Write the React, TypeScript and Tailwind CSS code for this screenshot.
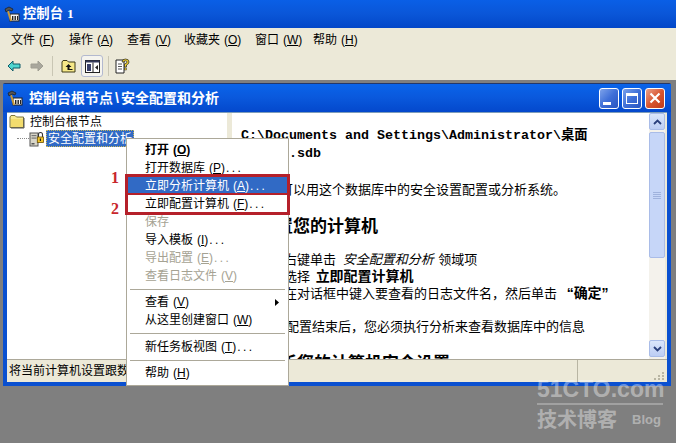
import React from "react";

const U = ({ k }: { k: string }) => (
  <span className="ml-[4px]">(<u>{k}</u>)</span>
);
const Dots = () => <span className="tracking-[2.4px] ml-[1px]">...</span>;

function MmcIcon({ className }: { className: string }) {
  return (
    <svg viewBox="0 0 16 16" className={className}>
      <rect x="6" y="8" width="9" height="7" fill="#f4f4f4" stroke="#222" />
      <rect x="8" y="10" width="1.4" height="4" fill="#222" />
      <rect x="10.5" y="10" width="1.4" height="4" fill="#222" />
      <rect x="13" y="10" width="1" height="4" fill="#222" />
      <path d="M4 5 L7 15" stroke="#c89a3a" strokeWidth="2" />
      <path d="M1 3 L5 1 L9 3 L8 5 L5 4 L2 6 Z" fill="#555" stroke="#111" strokeWidth="0.6" />
    </svg>
  );
}

function FolderIcon() {
  return (
    <svg viewBox="0 0 16 15" className="w-[16px] h-[15px] shrink-0">
      <path d="M1 3 L2 1.5 H6 L7.5 3 H14.5 V13.5 H1 Z" fill="#f7e98f" stroke="#7a7440" />
      <rect x="2" y="5" width="12" height="8" fill="#f2dc6e" />
      <path d="M15 4 V14 H2" stroke="#555" fill="none" />
    </svg>
  );
}

function SecIcon() {
  return (
    <svg viewBox="0 0 15 16" className="w-[15px] h-[16px] shrink-0">
      <rect x="1" y="2" width="8" height="13" fill="#d9d6c8" stroke="#555" />
      <rect x="2.5" y="4" width="5" height="1.2" fill="#777" />
      <rect x="2.5" y="6.5" width="5" height="1.2" fill="#777" />
      <rect x="2.5" y="12" width="3" height="1.5" fill="#555" />
      <path d="M9.5 6 V3.5 A2 2 0 0 1 13.5 3.5 V6" fill="none" stroke="#333" strokeWidth="1.1" />
      <rect x="8.3" y="6" width="6.2" height="5.5" fill="#f0c428" stroke="#6b5208" strokeWidth="0.8" />
      <rect x="10.8" y="7.5" width="1.2" height="2.5" fill="#222" />
    </svg>
  );
}

function ToolBar() {
  return (
    <div className="h-[28px] flex items-center bg-[#ece9d8] pl-[7px]">
      <svg viewBox="0 0 14 12" className="w-[14px] h-[12px]">
        <path d="M1 6 L6 1 V4 H13 V8 H6 V11 Z" fill="#4fd6d0" stroke="#0f5b68" />
      </svg>
      <svg viewBox="0 0 14 12" className="w-[14px] h-[12px] ml-[9px]">
        <path d="M13 6 L8 1 V4 H1 V8 H8 V11 Z" fill="#a9a79c" stroke="#a09e92" />
      </svg>
      <div className="w-px h-[20px] bg-[#c9c6b4] ml-[8px]" />
      <svg viewBox="0 0 15 14" className="w-[15px] h-[14px] ml-[8px]">
        <path d="M1 3 L2 1.5 H6 L7.5 3 H14 V13 H1 Z" fill="#f6e888" stroke="#3d3a18" />
        <path d="M7.5 5 L4.5 8 H6.5 V11 H11.5 V10 H8.5 V8 H10.5 Z" fill="#111" />
      </svg>
      <div className="ml-[5px] w-[22px] h-[22px] border border-[#b3b9cf] rounded-[3px] bg-[#f5f4ee] flex items-center justify-center">
        <svg viewBox="0 0 15 13" className="w-[15px] h-[13px]">
          <rect x="0.5" y="0.5" width="14" height="12" fill="#fff" stroke="#222" />
          <rect x="0.5" y="0.5" width="14" height="2" fill="#33395a" />
          <rect x="2" y="4" width="4" height="7" fill="#39406a" />
          <rect x="7.5" y="2.5" width="1" height="10" fill="#222" />
          <path d="M13 5 L10 7.5 L13 10 Z" fill="#222" />
        </svg>
      </div>
      <div className="w-px h-[20px] bg-[#c9c6b4] ml-[5px]" />
      <svg viewBox="0 0 15 16" className="w-[15px] h-[16px] ml-[6px]">
        <path d="M1 2 H9 V15 H1 Z" fill="#fff" stroke="#222" />
        <path d="M3 6 H7 M3 8.5 H7 M3 11 H7" stroke="#555" />
        <path d="M7 4 Q7 1 10.5 1 Q14 1 14 4 Q14 6 11.5 7 V9 H9.5 V6 Q12 5.5 12 4 Q12 2.8 10.5 2.8 Q9 2.8 9 4 Z" fill="#f6d52b" stroke="#222" strokeWidth="0.7" />
        <rect x="9.5" y="10" width="2" height="2" fill="#f6d52b" stroke="#222" strokeWidth="0.5" />
      </svg>
    </div>
  );
}

function WinButton({ kind }: { kind: "min" | "max" | "close" }) {
  const bg =
    kind === "close"
      ? "bg-gradient-to-br from-[#e8a08a] via-[#d9562f] to-[#c03a1a]"
      : "bg-gradient-to-br from-[#7ea2ea] via-[#3f6fd8] to-[#2a55c0]";
  return (
    <div className={`w-[20px] h-[21px] rounded-[3px] border border-white ${bg} flex items-center justify-center`}>
      {kind === "min" && <div className="w-[8px] h-[3px] bg-white self-end mb-[3px] mr-[4px]" />}
      {kind === "max" && <div className="w-[12px] h-[11px] border border-white border-t-[3px]" />}
      {kind === "close" && (
        <svg viewBox="0 0 12 12" className="w-[12px] h-[12px]">
          <path d="M1.5 1.5 L10.5 10.5 M10.5 1.5 L1.5 10.5" stroke="#fff" strokeWidth="2.2" />
        </svg>
      )}
    </div>
  );
}

function ScrollBar() {
  const btn = "w-[16px] h-[17px] rounded-[2px] border border-[#a9bce8] bg-gradient-to-b from-[#dbe6fb] to-[#bccdf4] flex items-center justify-center shrink-0";
  return (
    <div className="w-[16px] h-full bg-[#f4f2ec] flex flex-col mr-[2px]">
      <div className={btn}>
        <svg viewBox="0 0 9 6" className="w-[9px] h-[6px]"><path d="M1 5 L4.5 1.5 L8 5" fill="none" stroke="#2a3f7c" strokeWidth="1.8" /></svg>
      </div>
      <div className="h-[126px] mt-[2px] rounded-[2px] border border-[#a9bce8] bg-[#c6d6f8] flex flex-col items-center justify-center gap-[1px] shrink-0">
        <div className="w-[8px] h-px bg-[#9fb2dd]" />
        <div className="w-[8px] h-px bg-[#9fb2dd]" />
        <div className="w-[8px] h-px bg-[#9fb2dd]" />
        <div className="w-[8px] h-px bg-[#9fb2dd]" />
      </div>
      <div className="flex-1" />
      <div className={`${btn} mb-[2px]`}>
        <svg viewBox="0 0 9 6" className="w-[9px] h-[6px]"><path d="M1 1 L4.5 4.5 L8 1" fill="none" stroke="#2a3f7c" strokeWidth="1.8" /></svg>
      </div>
    </div>
  );
}

function Content() {
  const mono = "font-[family-name:'Liberation_Mono','Noto_Sans_CJK_SC',monospace] font-bold text-[13.33px] leading-[18px] text-black whitespace-nowrap";
  const body = "text-[13px] leading-[16px] whitespace-nowrap text-black";
  const head = "text-[17px] font-bold leading-[22px] whitespace-nowrap text-black";
  return (
    <div className="flex-1 min-w-0 bg-white overflow-hidden pl-[9px] pt-[14px]">
      <div className={mono}>C:\Documents and Settings\Administrator\桌面</div>
      <div className={mono}>\12345.sdb</div>
      <div className={`${body} mt-[19px]`}>您现在可以用这个数据库中的安全设置配置或分析系统。</div>
      <div className={`${head} mt-[18px] ml-[1px]`}>要配置您的计算机</div>
      <div className={`${body} mt-[14px] ml-[43px]`}>
        右键单击 <i className="ml-[3px] mr-[1px]">安全配置和分析</i> 领域项
      </div>
      <div className={`${body} ml-[43px]`}>
        选择 <b className="ml-[2px] text-[14px]">立即配置计算机</b>
      </div>
      <div className={`${body} ml-[43px]`}>
        在对话框中键入要查看的日志文件名，然后单击 <b className="ml-[6px] text-[14px]">“确定”</b>
      </div>
      <div className={`${body} mt-[17px] ml-[45px]`}>配置结束后，您必须执行分析来查看数据库中的信息</div>
      <div className={`${head} mt-[18px] ml-[5px]`}>要分析您的计算机安全设置</div>
    </div>
  );
}

function MenuItem({
  children,
  disabled,
  active,
  bold,
  arrow,
}: {
  children: React.ReactNode;
  disabled?: boolean;
  active?: boolean;
  bold?: boolean;
  arrow?: boolean;
}) {
  const color = active ? "bg-[#316ac5] text-white" : disabled ? "text-[#a5a292]" : "text-black";
  return (
    <div className={`h-[18px] pl-[18px] pr-[9px] flex items-center justify-between text-[12px] whitespace-nowrap ${color} ${bold ? "font-bold" : ""}`}>
      <span>{children}</span>
      {arrow && (
        <svg viewBox="0 0 4 7" className="w-[4px] h-[7px]"><path d="M0 0 L4 3.5 L0 7 Z" fill="#000" /></svg>
      )}
    </div>
  );
}

const Sep = ({ h }: { h: string }) => (
  <div className={`${h} flex items-center px-[3px]`}>
    <div className="h-px w-full bg-[#aca899]" />
  </div>
);

export default function App() {
  return (
    <div className="relative w-[676px] h-[443px] overflow-hidden bg-[#7f7f7f] font-[family-name:'Liberation_Sans','Noto_Sans_CJK_SC',sans-serif] select-none">
      {/* main title */}
      <div className="h-[28px] bg-gradient-to-b from-[#0a5fe6] via-[#0a56d8] to-[#0347c8] flex items-center pl-[4px] gap-[3px]">
        <MmcIcon className="w-[16px] h-[16px]" />
        <span className="text-white font-bold text-[13.33px] whitespace-nowrap">控制台<span className="ml-[4px] font-[family-name:'Liberation_Serif',serif]">1</span></span>
      </div>
      {/* menu */}
      <div className="h-[24px] bg-[#ece9d8] flex items-center pl-[11px] text-[12px] text-black whitespace-nowrap">
        <span className="w-[58px]">文件<U k="F" /></span>
        <span className="w-[58px]">操作<U k="A" /></span>
        <span className="w-[57px]">查看<U k="V" /></span>
        <span className="w-[71px]">收藏夹<U k="O" /></span>
        <span className="w-[58px]">窗口<U k="W" /></span>
        <span>帮助<U k="H" /></span>
      </div>
      <ToolBar />
      {/* child window */}
      <div className="mt-[3px] ml-[3px] w-[668px] h-[303px] flex flex-col bg-[#0a50d0] border-t border-[#24386a] rounded-t-[2px]">
        <div className="h-[28px] shrink-0 bg-gradient-to-b from-[#0a64ea] via-[#0a58dc] to-[#0448cc] flex items-center pl-[4px] pr-[4px]">
          <MmcIcon className="w-[16px] h-[16px] mr-[6px]" />
          <span className="text-white font-bold text-[14px] whitespace-nowrap">控制台根节点<span className="mx-[2px]">\</span>安全配置和分析</span>
          <div className="ml-auto flex gap-[3px] mr-[2px]">
            <WinButton kind="min" />
            <WinButton kind="max" />
            <WinButton kind="close" />
          </div>
        </div>
        <div className="flex-1 min-h-0 mx-[4px] mb-[4px] flex flex-col bg-[#ece9d8]">
          <div className="h-[248px] shrink-0 flex border-b border-[#aca899] border-t border-t-[#7f9db9]">
            {/* tree */}
            <div className="w-[220px] shrink-0 bg-white pt-[1px] pl-[2px] text-[12px] text-black overflow-hidden">
              <div className="h-[15px] flex items-center gap-[5px] whitespace-nowrap">
                <FolderIcon />
                <span>控制台根节点</span>
              </div>
              <div className="h-[17px] mt-[1px] flex items-center whitespace-nowrap ml-[8px]">
                <div className="w-[12px] h-0 border-t border-dotted border-[#888] shrink-0" />
                <SecIcon />
                <span className="ml-[2px] h-[17px] px-[1px] flex items-center bg-[#316ac5] text-white border border-dotted border-[#c9b75a]">安全配置和分析</span>
              </div>
            </div>
            {/* splitter */}
            <div className="w-[5px] shrink-0 bg-[#ece9d8]" />
            {/* details */}
            <Content />
            <ScrollBar />
          </div>
          {/* status */}
          <div className="flex-1 flex items-center pl-[2px] text-[12px] text-black whitespace-nowrap overflow-hidden">
            <div className="w-[569px] shrink-0 border-r border-[#b8b5a3] h-full flex items-center">
              <span>将当前计算机设置跟数</span>
            </div>
            <div className="ml-auto mr-[2px] self-end mb-[2px] grid grid-cols-3 gap-[1px] w-[11px]">
              <i /><i /><i className="w-[2px] h-[2px] bg-[#b8b5a3]" />
              <i /><i className="w-[2px] h-[2px] bg-[#b8b5a3]" /><i className="w-[2px] h-[2px] bg-[#b8b5a3]" />
              <i className="w-[2px] h-[2px] bg-[#b8b5a3]" /><i className="w-[2px] h-[2px] bg-[#b8b5a3]" /><i className="w-[2px] h-[2px] bg-[#b8b5a3]" />
            </div>
          </div>
        </div>
      </div>

      {/* watermark */}
      <div className="absolute left-[537px] top-[378px] w-[126px] text-[#ffffff66] pointer-events-none">
        <div className="text-[23px] leading-[22px] font-bold whitespace-nowrap">51CTO.com</div>
        <div className="h-[2px] bg-[#ffffff44] mt-[3px]" />
        <div className="flex items-end mt-[3px]">
          <span className="text-[20px] leading-[24px] font-bold whitespace-nowrap">技术博客</span>
          <span className="text-[13px] font-bold ml-[15px] mb-[3px]">Blog</span>
        </div>
      </div>

      {/* context menu */}
      <div className="absolute left-[126px] top-[138px] w-[163px] h-[248px] bg-white border border-[#aca899] py-[2px]">
        <MenuItem bold>打开<U k="O" /></MenuItem>
        <MenuItem>打开数据库<U k="P" /><Dots /></MenuItem>
        <MenuItem active>立即分析计算机<U k="A" /><Dots /></MenuItem>
        <MenuItem>立即配置计算机<U k="F" /><Dots /></MenuItem>
        <MenuItem disabled>保存</MenuItem>
        <MenuItem>导入模板<U k="I" /><Dots /></MenuItem>
        <MenuItem disabled>导出配置<U k="E" /><Dots /></MenuItem>
        <MenuItem disabled>查看日志文件<U k="V" /></MenuItem>
        <Sep h="h-[8px]" />
        <MenuItem arrow>查看<U k="V" /></MenuItem>
        <MenuItem>从这里创建窗口<U k="W" /></MenuItem>
        <Sep h="h-[9px]" />
        <MenuItem>新任务板视图<U k="T" /><Dots /></MenuItem>
        <Sep h="h-[8px]" />
        <MenuItem>帮助<U k="H" /></MenuItem>
      </div>

      {/* annotations */}
      <div className="absolute left-[125px] top-[174px] w-[165px] h-[21px] border-x-[3px] border-t-[3px] border-b-[2px] border-[#b5202a]" />
      <div className="absolute left-[125px] top-[193px] w-[165px] h-[22px] border-x-[3px] border-t-[2px] border-b-[3px] border-[#b5202a]" />
      <span className="absolute left-[111px] top-[168px] text-[16px] leading-[20px] font-bold text-[#c8262c] font-[family-name:'Liberation_Serif',serif]">1</span>
      <span className="absolute left-[111px] top-[199px] text-[16px] leading-[20px] font-bold text-[#c8262c] font-[family-name:'Liberation_Serif',serif]">2</span>
    </div>
  );
}
